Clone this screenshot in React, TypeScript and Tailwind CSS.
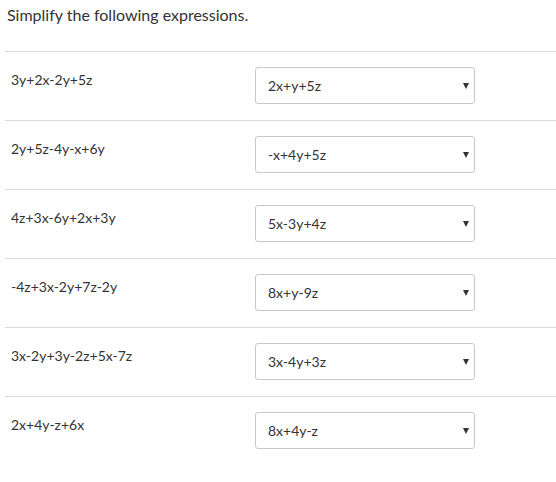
const rows = [
  { q: "3y+2x-2y+5z", a: "2x+y+5z" },
  { q: "2y+5z-4y-x+6y", a: "-x+4y+5z" },
  { q: "4z+3x-6y+2x+3y", a: "5x-3y+4z" },
  { q: "-4z+3x-2y+7z-2y", a: "8x+y-9z" },
  { q: "3x-2y+3y-2z+5x-7z", a: "3x-4y+3z" },
  { q: "2x+4y-z+6x", a: "8x+4y-z" },
]

function Dropdown({ value }: { value: string }) {
  return (
    <div className="flex h-[37px] w-[220px] items-center justify-between rounded-[3px] border border-[#c8c8c8] bg-white pl-[12px] pr-[5px] text-[14px] text-[#333]">
      <span>{value}</span>
      <svg width="6" height="7" viewBox="0 0 6 7">
        <path d="M0 1 L6 1 L3 7 Z" fill="#333" />
      </svg>
    </div>
  )
}

export default function App() {
  return (
    <div className="h-[482px] w-[556px] bg-white text-[#333]" style={{ fontFamily: "Lato, 'Open Sans', sans-serif" }}>
      <h1 className="px-[7px] pt-[6px] pb-[27px] text-[16px] leading-[18px] font-normal text-[#333]">
        Simplify the following expressions.
      </h1>
      <div className="ml-[5px]">
        {rows.map((r) => (
          <div key={r.q} className="flex h-[69px] border-t border-[#dcdcdc]">
            <div className="w-[250px] pl-[6px] pt-[20px] text-[14px] leading-[16px] text-[#333]">{r.q}</div>
            <div className="pt-[15px]">
              <Dropdown value={r.a} />
            </div>
          </div>
        ))}
      </div>
    </div>
  )
}
